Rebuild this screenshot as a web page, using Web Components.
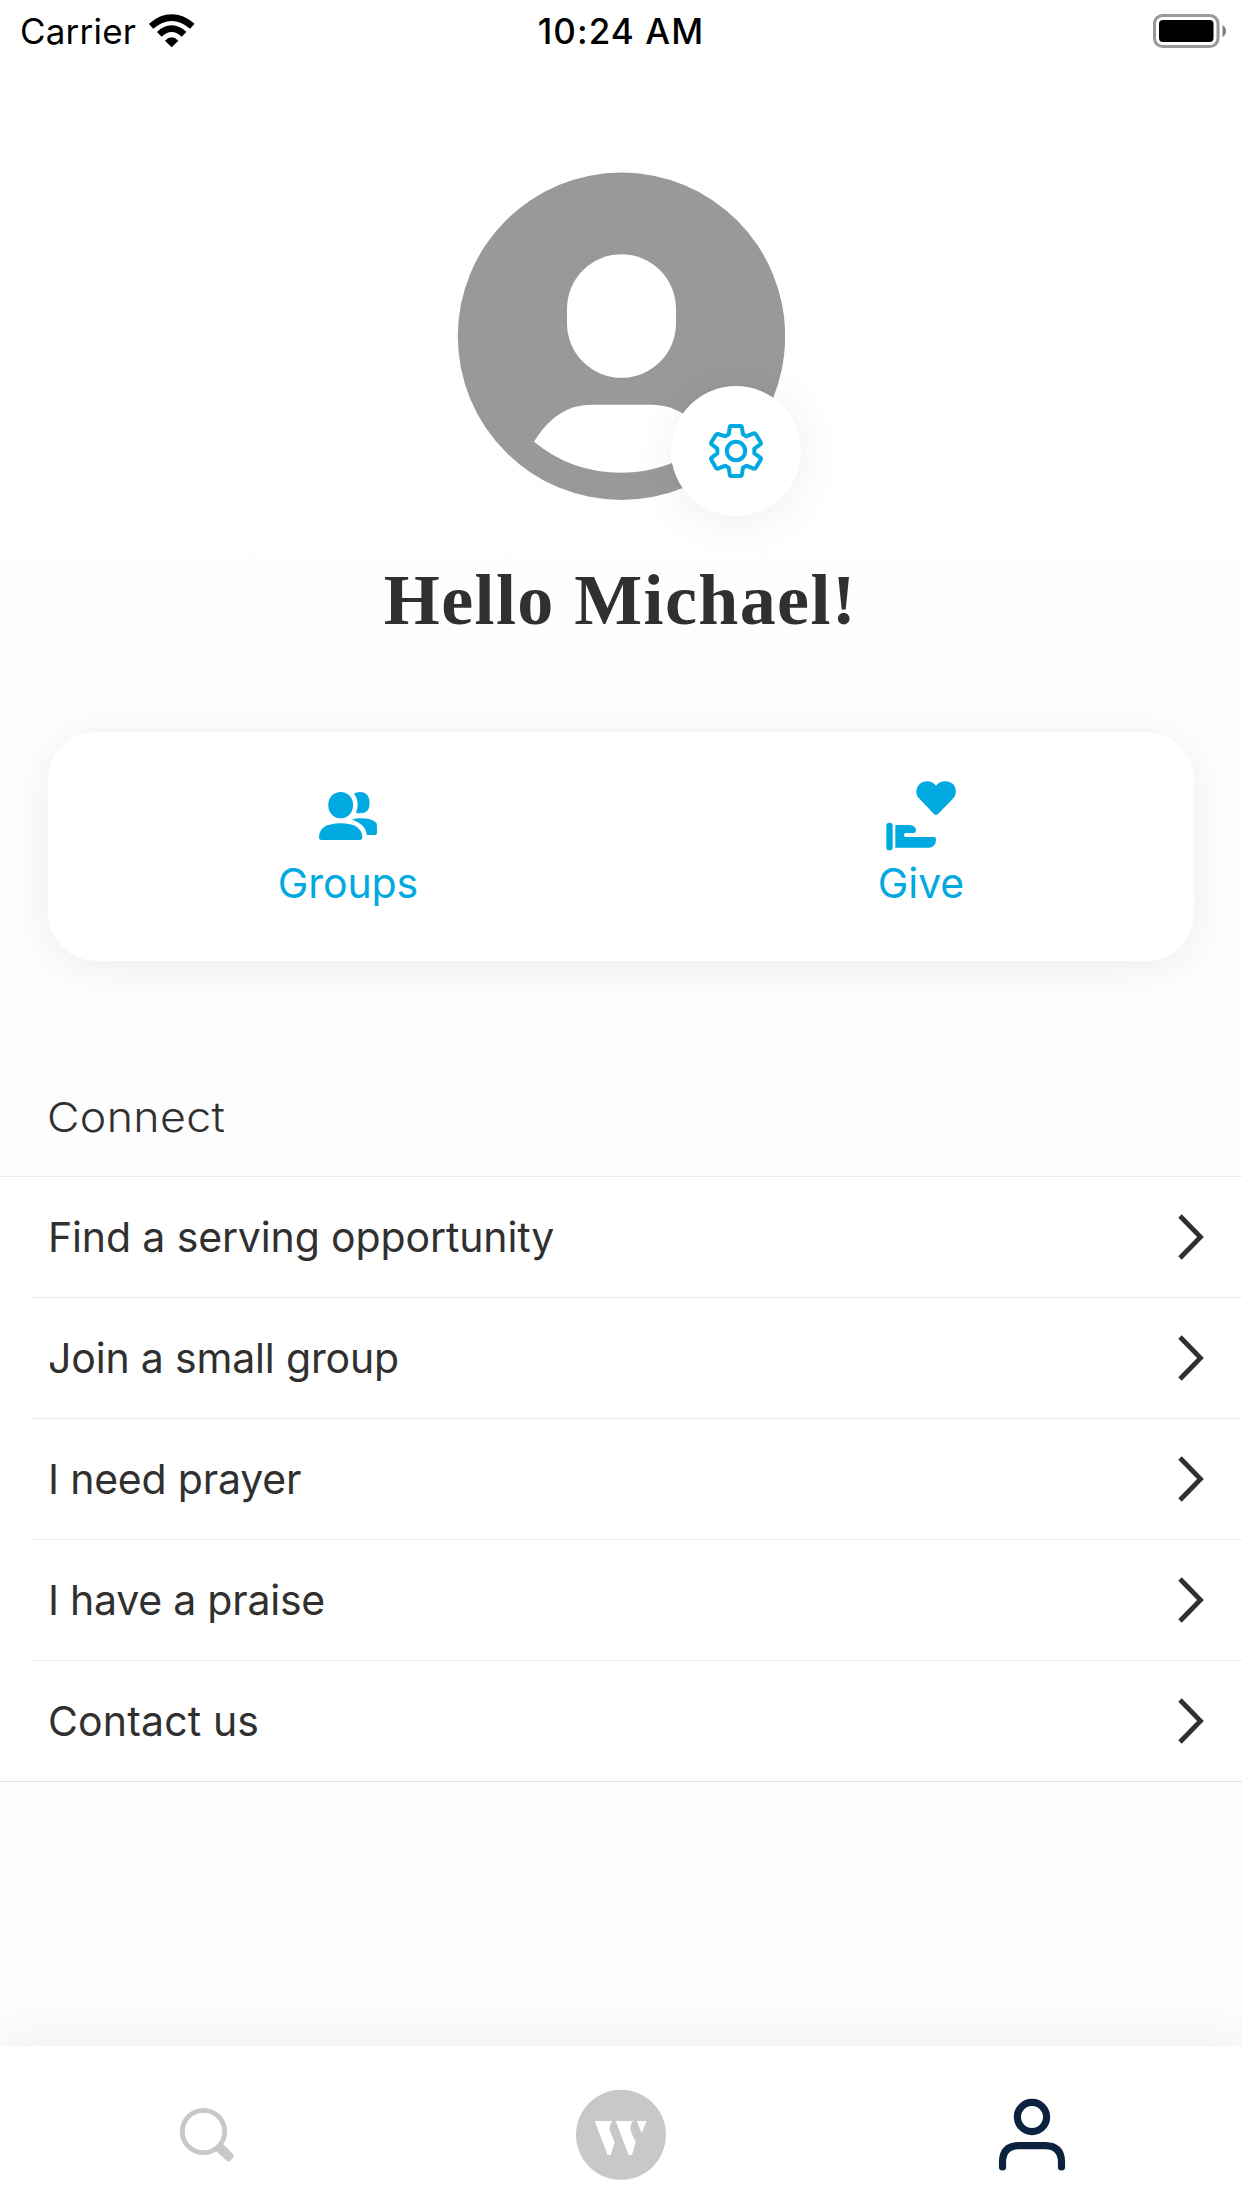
<!DOCTYPE html>
<html lang="en">
<head>
<meta charset="utf-8">
<title>Profile</title>
<style>
html,body{margin:0;padding:0}
body{width:1242px;height:2208px;overflow:hidden;font-family:Inter,"Liberation Sans",sans-serif;color:#303030}
</style>
</head>
<body>
<profile-screen>
  <status-bar slot="status" carrier="Carrier" time="10:24 AM"></status-bar>
  <user-avatar slot="hero"></user-avatar>
  <span slot="greeting">Hello Michael!</span>
  <action-card slot="actions">
    <action-button icon="groups">Groups</action-button>
    <action-button icon="give">Give</action-button>
  </action-card>
  <link-list heading="Connect">
    <link-row style="--ls:-.13px">Find a serving opportunity</link-row>
    <link-row style="--ls:-.17px">Join a small group</link-row>
    <link-row style="--ls:-.2px">I need prayer</link-row>
    <link-row style="--ls:-.23px">I have a praise</link-row>
    <link-row last>Contact us</link-row>
  </link-list>
  <tab-bar slot="tabs"></tab-bar>
</profile-screen>
<script>
const define = (name, render) => customElements.define(name, class extends HTMLElement {
  constructor() { super(); this.attachShadow({ mode: "open" }); }
  connectedCallback() { this.shadowRoot.innerHTML = render(this); }
});

define("profile-screen", () => `
<style>
:host{display:flex;flex-direction:column;width:1242px;height:2208px;background:linear-gradient(#fff 0,#fff 100px,#fcfcfc 1700px)}
.hero{display:flex;justify-content:center;padding-top:112px}
h1{margin:55px 0 0;height:90px;padding-left:3px;text-align:center;font:700 72px/90px "Source Serif Pro","Liberation Serif",serif;letter-spacing:1.4px;color:#303030;text-indent:-4px}
.actions{padding:87px 48px 0}
.body{flex:1}
</style>
<slot name="status"></slot>
<div class="hero"><slot name="hero"></slot></div>
<h1><slot name="greeting"></slot></h1>
<div class="actions"><slot name="actions"></slot></div>
<div class="body"><slot></slot></div>
<slot name="tabs"></slot>`);

define("status-bar", el => `
<style>
:host{display:grid;grid-template-columns:1fr auto 1fr;align-items:center;height:60px;color:#000;font-size:35px;line-height:60px}
.left{display:flex;align-items:center;padding-left:20px;gap:13px;letter-spacing:.2px}
.time{font-weight:500;letter-spacing:1.1px}
.carrier,.time{padding-top:1px;line-height:61px}
.right{display:flex;justify-content:flex-end;padding-right:15px}
svg{display:block;margin-bottom:1px}
</style>
<div class="left"><span class="carrier">${el.getAttribute("carrier")}</span>
<svg width="46" height="34" viewBox="448 38 138 102"><g fill="none" stroke="#000">
<path d="M454 75Q484 49 516 49Q548 49 578 75" stroke-width="20"/><path d="M479 99Q496 82 516 82Q536 82 553 99" stroke-width="20"/></g><path d="M496 118Q516 98 536 118L516 138Z"/></svg></div>
<span class="time">${el.getAttribute("time")}</span>
<div class="right"><svg width="74" height="36" viewBox="0 0 74 36"><rect x="1.5" y="2.500" width="63.500" height="31" rx="8" fill="none" stroke="#999" stroke-width="3"/><rect x="6" y="7" width="54.500" height="22" rx="4"/><path d="M69.500 12Q73 14 73 18T69.500 24Z" fill="#808080"/></svg></div>`);

define("user-avatar", () => `
<style>
:host{display:block;position:relative;width:328px;height:328px}
svg{display:block}
.badge{position:absolute;left:214px;top:214px;width:130px;height:130px;border-radius:50%;background:#fff;box-shadow:0 3px 44px rgba(0,0,0,.065);display:flex;align-items:center;justify-content:center}
</style>
<svg width="328" height="328" viewBox="0 0 328 328"><g transform="translate(.5 .3)"><circle cx="164" cy="164" r="163.700" fill="#98999b"/>
<rect x="109.5" y="82" width="109" height="123.5" rx="54.5" fill="#fff"/>
<path d="M76.500 269.500C90 247 109 232.500 134 232.500H194C219 232.500 238 247 251 269.500Q211 300.500 164 300.500Q114 300.500 76.500 269.500Z" fill="#fff"/></g></svg>
<div class="badge"><svg width="56" height="56" viewBox="804 819 168 168" fill="none" stroke="#00a9e0" stroke-width="12" stroke-linejoin="round">
<path d="M871 828H903Q905 828 905.500 831L909 853L919 859L941 850Q945 849 947 852L962 877Q964 880 961 883L943 896V910L961 923Q964 926 962 929L947 954Q945 957 941 956L919 947L909 953L905.500 975Q905 978 903 978H873Q870 978 869.500 975L866 953L856 947L834 956Q830 957 828 954L814 929Q812 926 815 923L832 910V896L815 883Q812 880 814 877L828 854Q830 851 834 852L856 859L866 853L869.500 831Q870 828 873 828Z"/><circle cx="888" cy="903" r="27.500"/></svg></div>`);

define("action-card", () => `
<style>:host{display:flex;height:229px;border-radius:48px;background:#fff;box-shadow:0 5px 46px rgba(0,0,0,.07)}
::slotted(*){flex:1}</style><slot></slot>`);

const actionIcons = {
  groups: `<svg width="60" height="72" viewBox="174 60 180 216" fill="#00a9e0"><rect x="205" y="96" width="74" height="79" rx="37"/><path d="M177 232Q178 190 242 190Q305 190 307 232Q307 240 299 240H185Q177 240 177 232Z"/><path d="M282 101Q289 96 300 96C319 96 329 110 329 129Q329 160 300 160Q294 160 288 158Q293 148 293 135Q293 114 282 101Z"/><path d="M276 179Q285 175 300 175Q335 175 349 188Q351 191 351 205V219Q351 225 345 225H320Q319 194 276 179Z"/></svg>`,
  give: `<svg width="72" height="72" viewBox="75 60 216 216" fill="#00a9e0"><path d="M228 77C216 60 192 60 180 71C167 83 165 102 177 115L221 161Q228 168 235 161L280 115C291 102 290 83 278 71C265 60 240 60 228 77Z"/><rect x="79" y="188" width="19" height="83" rx="9.500"/><path d="M106 195H148Q169 196 168 213Q167 219 160 219H137Q132 219 132 225T137 231H222Q228 231 228 238Q228 262 207 263H106Z"/></svg>`
};
define("action-button", el => `
<style>:host{display:flex;flex-direction:column;align-items:center;box-sizing:border-box;padding:48px 0 0 27px;color:#00a9e0;font-size:41px;line-height:50px;letter-spacing:-.1px}
svg{display:block;margin-bottom:6px}</style>${actionIcons[el.getAttribute("icon")]}<span><slot></slot></span>`);

define("link-list", el => `
<style>:host{display:block;padding-top:128px}
h2{margin:0;padding:0 0 31px 47px;font-weight:300;font-size:41px;line-height:56px;letter-spacing:.3px;color:#303030}
h2 span{display:inline-block;transform:scaleX(1.09);transform-origin:0 50%}
.rows{border-top:1px solid #ebebeb;background:#fff}</style>
<h2><span>${el.getAttribute("heading")}</span></h2><div class="rows"><slot></slot></div>`);

define("link-row", () => `
<style>:host{display:flex;padding-left:32px;background:#fff;font-size:41px}
:host([last]){padding-left:0}:host([last]) .row{padding-left:48px;border-color:#e4e4e4}
.row{flex:1;display:flex;align-items:center;justify-content:space-between;box-sizing:border-box;height:121px;padding:0 38px 0 16px;border-bottom:1px solid #ebebeb;letter-spacing:var(--ls,.15px)}
svg{display:block}</style>
<div class="row"><span><slot></slot></span><svg width="27" height="48" viewBox="0 0 27 48"><path d="M3 3L23.500 24L3 45" fill="none" stroke="#303030" stroke-width="4.800"/></svg></div>`);

define("tab-bar", () => `
<style>:host{display:grid;grid-template-columns:repeat(3,1fr);height:162px;background:#fff;box-shadow:0 0 44px rgba(0,0,0,.065)}
div{display:flex;justify-content:center;padding-top:41px}svg{display:block}</style>
<div><svg width="414" height="96" viewBox="0 2087 414 96"><circle cx="203.500" cy="2131.500" r="21.200" fill="none" stroke="#c9c8c7" stroke-width="4.800"/><path d="M216 2151L223 2144L233.500 2154.500Q234.500 2156 233.500 2157L230 2161Q228.500 2162.500 227 2161Z" fill="#c9c8c7"/></svg></div>
<div><svg width="96" height="96" viewBox="39 51 288 288"><circle cx="183" cy="194.500" r="135" fill="#c9c8c7"/><g fill="#fff"><path d="M104 153H157Q146 169 150 183L164 217L152 255H143Z"/><path d="M167 153H219Q208 169 212 183L227 217L216 255H206Z"/><path d="M231 153H260L245 190Z"/></g></svg></div>
<div><svg width="414" height="96" viewBox="828 2087 414 96" fill="none" stroke="#0c2340" stroke-width="7.200" stroke-linecap="round"><circle cx="1032" cy="2117" r="14.600"/><path d="M1002.500 2167V2161.500Q1003 2146 1018.500 2145.700H1045.500Q1061 2146 1061.500 2161.500V2167"/></svg></div>`);
</script>
</body>
</html>
